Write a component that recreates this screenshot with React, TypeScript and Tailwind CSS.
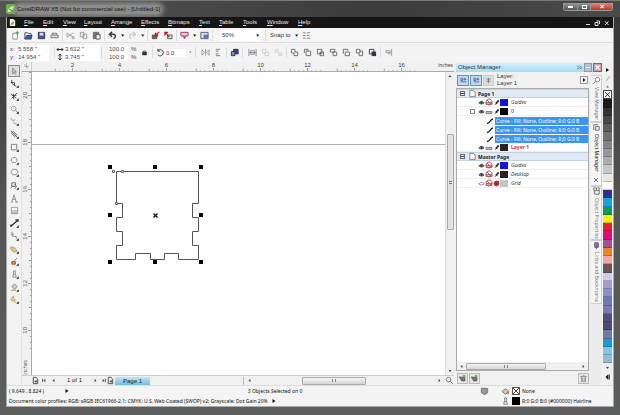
import type { ReactNode } from "react";

// ---------- small drawing helpers ----------

function Glyph({ children, className = "" }: { children: ReactNode; className?: string }) {
  return (
    <svg viewBox="0 0 10 10" className={`h-[9px] w-[9px] shrink-0 ${className}`} fill="none" stroke="#444" strokeWidth="1">
      {children}
    </svg>
  );
}

function Tool({ label, children }: { label: string; children: ReactNode }) {
  return (
    <button aria-label={label} className="flex h-[12px] w-[13px] shrink-0 items-center justify-center">
      <Glyph>{children}</Glyph>
    </button>
  );
}

function Caret() {
  return (
    <svg viewBox="0 0 7 7" className="h-[7px] w-[7px] shrink-0">
      <path d="M2 2.500h3.400L3.700 4.800z" fill="#222" />
    </svg>
  );
}

function Sep() {
  return <span className="mx-px h-[11px] w-px shrink-0 bg-[#dcdcdc]" />;
}

// ---------- title and menu ----------

function TitleBar() {
  return (
    <header className="flex h-[17px] shrink-0 items-center border-t border-[#777] bg-linear-to-r from-[#555] via-[#3c3c3c] via-60% to-[#4a4a4a] pr-[7px] pl-[6px]">
      <svg viewBox="0 0 10 10" className="h-[10px] w-[10px]">
        <rect width="10" height="10" rx="2" fill="#6fb43c" />
        <path d="M1.500 8C2 4 5 2 8.500 2 8 5 6 8 1.500 8z" fill="#e9f8d8" />
        <path d="M3 5l4 2" stroke="#3c8a1c" />
      </svg>
      <h1 className="rounded-full bg-[#8b8b8b] px-px text-[6px] leading-[9px] whitespace-nowrap text-[#111] shadow-[0_0_4px_3px_#858585]">
        CorelDRAW X5 (Not for commercial use) - [Untitled-1]
      </h1>
      <div className="mt-[2px] ml-auto flex h-[8px] self-start overflow-hidden rounded-b-[3px] border border-t-0 border-[#999]">
        <button aria-label="Minimize" className="flex w-[14px] items-center justify-center border-r border-[#999] bg-linear-to-b from-[#999] to-[#555]">
          <span className="h-[2px] w-[5px] bg-white" />
        </button>
        <button aria-label="Maximize" className="flex w-[13px] items-center justify-center border-r border-[#999] bg-linear-to-b from-[#999] to-[#555]">
          <span className="h-[4px] w-[5px] border border-white" />
        </button>
        <button aria-label="Close" className="flex w-[21px] items-center justify-center bg-linear-to-b from-[#e08a7c] to-[#c02c1c]">
          <svg viewBox="0 0 6 6" className="h-[5px] w-[6px]">
            <path d="M1 1l4 4M5 1L1 5" stroke="#fff" strokeWidth="1.300" />
          </svg>
        </button>
      </div>
    </header>
  );
}

const menus = [
  { name: "File", width: "w-[19px]" },
  { name: "Edit", width: "w-[20px]" },
  { name: "View", width: "w-[21px]" },
  { name: "Layout", width: "w-[27px]" },
  { name: "Arrange", width: "w-[30px]" },
  { name: "Effects", width: "w-[27px]" },
  { name: "Bitmaps", width: "w-[31px]" },
  { name: "Text", width: "w-[20px]" },
  { name: "Table", width: "w-[24px]" },
  { name: "Tools", width: "w-[24px]" },
  { name: "Window", width: "w-[31px]" },
  { name: "Help", width: "w-[16px]" },
];

function MenuBar() {
  return (
    <nav className="flex h-[11px] shrink-0 items-center bg-[#151515] text-[6px] leading-[9px] text-[#e8e8e8]">
      <svg viewBox="0 0 10 10" className="mr-[7px] ml-px h-[9px] w-[9px]">
        <path d="M2 1h4l2 2v6H2z" fill="#f2f5e6" />
        <path d="M3 8c0-2 1-4 4-4 0 2-1 4-4 4z" fill="#7cb342" />
      </svg>
      {menus.map((m) => (
        <button key={m.name} className={`${m.width} shrink-0 text-left`}>
          <u>{m.name[0]}</u>
          {m.name.slice(1)}
        </button>
      ))}
      <svg viewBox="0 0 28 8" className="mr-[2px] ml-auto h-[8px] w-[28px]" stroke="#ddd" fill="none">
        <path d="M3 5.500h4M12 3.500h3v3h-3zM13.500 2h3v3M22 2.500l3.500 3.500M25.500 2.500L22 6" />
      </svg>
    </nav>
  );
}

// ---------- toolbars ----------

function StandardBar() {
  return (
    <div className="flex h-[15px] shrink-0 items-center border-b border-[#dedede] bg-[#f5f5f5] pl-[2px]">
      <Tool label="New">
        <path d="M2 2.500h5v6.500H2z" stroke="#888" fill="#fff" />
        <path d="M7 0v4M5 2h4" stroke="#3c9a3c" />
      </Tool>
      <Tool label="Open">
        <path d="M1 9V2h3l1 1h3v2" stroke="#33447c" />
        <path d="M1 9l2-4h6L8 9z" fill="#4a5c98" stroke="#33447c" />
      </Tool>
      <Tool label="Save">
        <path d="M1.500 1.500h7v7h-7z" fill="#4a5596" stroke="#2c3468" />
        <path d="M3 2h4v3H3z" fill="#dfe4f4" stroke="none" />
      </Tool>
      <Tool label="Print">
        <path d="M1 4.500h8v3H1zM2.500 4.500v-2h5v2" stroke="#777" fill="#ddd" />
      </Tool>
      <Sep />
      <Tool label="Cut">
        <path d="M1 2l7 5M1 7l7-5M1 3v3" stroke="#999" />
        <circle cx="8" cy="7.500" r="1.300" stroke="#999" />
      </Tool>
      <Tool label="Copy">
        <path d="M1.500 1.500h4v5h-4zM4.500 3.500h4v5h-4z" stroke="#999" fill="#eee" />
      </Tool>
      <Tool label="Paste">
        <path d="M1.500 1.500h6v7h-6z" fill="#777" stroke="#666" />
        <path d="M4.500 4h4.500v5H4.500z" fill="#eee" stroke="#555" />
      </Tool>
      <Sep />
      <Tool label="Undo">
        <path d="M4.500 1L1.500 3.700l3 2.800M2 3.700h4c3 0 3 4 0 5" stroke="#3e3e46" strokeWidth="1.600" />
      </Tool>
      <Caret />
      <Tool label="Redo">
        <path d="M5.500 1l3 2.700-3 2.800M8 3.700H4C1 3.700 1 7.700 4 8.700" stroke="#ccc" strokeWidth="1.400" />
      </Tool>
      <Caret />
      <Sep />
      <Tool label="Import">
        <path d="M1.500 4.500h5v4h-5z" stroke="#555" fill="#b04050" />
        <path d="M9 1L5 5M5 2v3h3" stroke="#b01c30" strokeWidth="1.400" />
      </Tool>
      <Tool label="Export">
        <path d="M4 4.500h5v4H4z" stroke="#555" fill="#ddd" />
        <path d="M1 1.500l5 5M1 5V1.500h3.500" stroke="#b01c30" strokeWidth="1.400" />
      </Tool>
      <Sep />
      <Tool label="Application launcher">
        <path d="M1 1.500h8v4H1z" stroke="#a02848" fill="#f4d4dc" />
        <path d="M3 6h4L5 9z" fill="#a02848" stroke="none" />
      </Tool>
      <Caret />
      <Tool label="Welcome screen">
        <path d="M1 1.500h8v7H1z" stroke="#4a5078" fill="#dfe2f0" />
        <path d="M4 4h5v4H4z" fill="#6a74a8" stroke="none" />
      </Tool>
      <Sep />
      <div className="relative mr-[3px] ml-[6px] flex h-[11px] w-[41px] shrink-0 items-center bg-white">
        <select aria-label="Zoom level" className="h-[11px] w-full appearance-none pl-[2px] text-[6px] leading-[11px] text-[#333]">
          <option>50%</option>
        </select>
        <span className="pointer-events-none absolute inset-y-0 right-0 flex items-center">
          <Caret />
        </span>
      </div>
      <Sep />
      <button className="ml-[3px] flex items-center gap-[2px] text-[6px] text-[#333]">
        Snap to <Caret />
      </button>
      <Tool label="Options">
        <path d="M1 2h3M1 5h3M1 8h3M5.500 2H9M5.500 5H8M5.500 8H9" stroke="#777" />
      </Tool>
    </div>
  );
}

function Field({ label, value, className }: { label: string; value: string; className: string }) {
  return (
    <input
      aria-label={label}
      defaultValue={value}
      className={`h-[8px] shrink-0 bg-white px-px text-[6px] leading-[8px] text-[#444] ${className}`}
    />
  );
}

const shaping = [
  { label: "Weld", d: "M1.500 1.500h4v3h3v4h-4v-3h-3z" },
  { label: "Trim", d: "M1.500 5.500v-4h4v2M3.500 3.500h5v5h-5z" },
  { label: "Intersect", d: "M1.500 1.500h5v5h-5zM4.500 4.500h4v4h-4zM4.500 5.500h2" },
  { label: "Simplify", d: "M1.500 1.500h5v3h-5zM4.500 4.500h4v4h-4z" },
  { label: "Front minus back", d: "M1.500 6.500v-5h5v2M3.500 4.500h5v4h-5z" },
  { label: "Back minus front", d: "M1.500 1.500h4v4h-4zM5.500 3.500h3v5h-4v-3" },
];

function PropertyBar() {
  return (
    <div className="flex h-[19px] shrink-0 items-center bg-[#f3f3f3] pl-[3px] text-[6px] leading-[8px] text-[#444]">
      <div className="flex w-[43px] shrink-0 flex-col">
        <label className="flex">
          <span className="w-[7px]">x:</span>
          <Field label="x" value={'5.558 "'} className="w-[32px]" />
        </label>
        <label className="flex">
          <span className="w-[7px]">y:</span>
          <Field label="y" value={'14.954 "'} className="w-[32px]" />
        </label>
      </div>
      <Sep />
      <svg viewBox="0 0 8 16" className="h-[16px] w-[8px] shrink-0" stroke="#333" fill="none">
        <path d="M1 4.500h6M2.500 3L1 4.500 2.500 6M5.500 3L7 4.500 5.500 6M4 9v6M2.500 10.500L4 9l1.500 1.500M2.500 13.500L4 15l1.500-1.500" />
      </svg>
      <div className="flex w-[36px] shrink-0 flex-col">
        <Field label="Width" value={'3.612 "'} className="w-full" />
        <Field label="Height" value={'3.745 "'} className="w-full" />
      </div>
      <Sep />
      <div className="ml-[5px] flex w-[20px] shrink-0 flex-col">
        <Field label="Scale x" value="100.0" className="w-full" />
        <Field label="Scale y" value="100.0" className="w-full" />
      </div>
      <div className="flex w-[10px] shrink-0 flex-col pl-[3px]">
        <span>%</span>
        <span>%</span>
      </div>
      <Tool label="Lock ratio">
        <path d="M3.500 5V3.500h3V5" />
        <path d="M2.500 4.500h5v3.500h-5z" fill="#333" stroke="none" />
      </Tool>
      <Sep />
      <span className="w-[2px] shrink-0" />
      <Glyph>
        <path d="M2 3a3.500 3.500 0 1 1 0 4.500M2 1v2.500h2.500" />
      </Glyph>
      <Field label="Rotation" value="0.0" className="w-[21px]" />
      <span className="w-[8px] shrink-0 pl-[3px]">°</span>
      <Sep />
      <span className="w-[2px] shrink-0" />
      <Tool label="Mirror horizontally">
        <path d="M1 2l3 3-3 3zM9 2L6 5l3 3zM5 1v8" stroke="#999" />
      </Tool>
      <Tool label="Mirror vertically">
        <path d="M2 1.500h5M2 3.500h3M2 6.500h3M2 8.500h5" stroke="#777" />
      </Tool>
      <Sep />
      <Tool label="Wrap text">
        <path d="M4 1.500h5v5H4z" fill="#3c3c84" stroke="#26265c" />
        <path d="M1.500 4h4v4.500h-4z" fill="#8c8cc0" stroke="#26265c" />
      </Tool>
      <Sep />
      <span className="w-[2px] shrink-0" />
      <Tool label="Combine">
        <path d="M1 1v8M9 1v8M3 3h4v4H3zM1 5h8" stroke="#888" />
      </Tool>
      <Tool label="Group">
        <path d="M1.500 1.500h4v4h-4zM4.500 4.500h4v4h-4z" stroke="#ccc" />
      </Tool>
      <Tool label="Ungroup">
        <path d="M1.500 1.500h3v3h-3zM5.500 5.500h3v3h-3z" stroke="#ccc" />
      </Tool>
      <Sep />
      {shaping.map((s) => (
        <Tool key={s.label} label={s.label}>
          <path d={s.d} stroke="#666" />
        </Tool>
      ))}
      <Tool label="Create boundary">
        <path d="M1.500 1.500h5v5h-5z" fill="#eee" stroke="#333" />
        <path d="M4 4h5v5H4z" fill="#33334c" stroke="none" />
      </Tool>
      <Sep />
      <Tool label="Align">
        <path d="M2 3h5v2H2zM4 6.500h4M8.500 1v8" stroke="#999" />
      </Tool>
    </div>
  );
}

// ---------- toolbox ----------

const tools = [
  { name: "Shape", d: "M2 1c0 4 1 6 5 7M1 4h4v3", color: "#444" },
  { name: "Crop", d: "M1 2l6 5M2 7l6-6M2 4h5M4 2v6", color: "#444" },
  { name: "Zoom", d: "M4 1.500a2.500 2.500 0 1 0 .1 0zM6 6l3 3", color: "#888" },
  { name: "Freehand", d: "M1 1l2 3 3-1M4 5c0 3 3 3 4 3", color: "#999" },
  { name: "Smart fill", d: "M1 1l7 7M1 3l5 5M3 1l5 5", color: "#555" },
  { name: "Rectangle", d: "M1.500 1.500h6v6h-6z", color: "#777" },
  { name: "Ellipse", d: "M4.500 1.500a3.200 3 0 1 0 .1 0z", color: "#888" },
  { name: "Polygon", d: "M3 1.500h4l2 3-2 3H3l-2-3z", color: "#888" },
  { name: "Basic shapes", d: "M2 2h4v4H2zM5 4a2 2 0 1 1 0 4M1 8l2-3", color: "#666" },
  { name: "Text", d: "M2 9l2.500-8L7 9M3 6h3M1 9h2M6 9h3", color: "#888" },
  { name: "Table", d: "M1.500 1.500h7v6h-7zM1.500 5.500h7M1 8.500h8", color: "#999" },
  { name: "Dimension", d: "M1 8l7-6M1 6v3M6 1h3v2", color: "#333" },
  { name: "Connector", d: "M1 1h2v4h4v3M1 3h3", color: "#888" },
  { name: "Blend", d: "M1 2l4 1 3 4-4 1-3-3z", color: "#c09850", fill: "#dcc48c" },
  { name: "Eyedropper", d: "M8 1L5 4M2 5h4v3H2z", color: "#a85c34", fill: "#d88850" },
  { name: "Outline", d: "M4 1h2v3l1 4H3l1-4zM4 5h2", color: "#888" },
  { name: "Fill", d: "M2 4l3-3 3 3-3 3zM1 8h6", color: "#a08850", fill: "#ccc" },
  { name: "Interactive fill", d: "M4 1v3l2 2-3 1-2-2zM5 8h2", color: "#d09a40", fill: "#ecc880" },
];

function Toolbox() {
  return (
    <aside className="w-[15px] shrink-0 border-r border-[#e2e2e2] bg-[#f3f3f3] pt-[3px]">
      <div className="flex h-[241px] flex-col items-center justify-between">
        <button aria-label="Pick" className="flex h-[12px] w-[12px] items-center justify-center border border-[#888] bg-[#dedede]">
          <Glyph>
            <path d="M3 1.500v6l2-1.500 1.500 2.500M3 1.500l4 4H5" stroke="#777" />
          </Glyph>
        </button>
        {tools.map((t) => (
          <button key={t.name} aria-label={t.name} className="flex h-[12px] w-[12px] items-center justify-center">
            <Glyph>
              <path d={t.d} stroke={t.color} fill={t.fill} strokeWidth={t.name === "Dimension" ? "1.500" : "1"} />
              {t.name !== "Text" && t.name !== "Table" && <path d="M7.500 9.500h2v-2z" fill="#111" stroke="#111" strokeWidth="0.500" />}
            </Glyph>
          </button>
        ))}
      </div>
    </aside>
  );
}

// ---------- rulers and canvas ----------

function HorizontalRuler() {
  return (
    <div className="flex h-[10px] shrink-0 border-b border-[#aaa] bg-[#f1f1f1] text-[6px] leading-[6px] text-[#444]">
      <div className="w-[10px] shrink-0 border-r border-[#ccc]">
        <Glyph>
          <path d="M2 2l5 5M2 5h6M5 1v6" stroke="#999" strokeWidth="0.700" />
        </Glyph>
      </div>
      <div className="flex min-w-0 flex-1 overflow-hidden pl-[17px]">
        {[2, 4, 6, 8, 10, 12, 14, 16].map((n) => (
          <div key={n} className="flex w-[47px] shrink-0 flex-col items-center justify-between">
            <span className="leading-[6px]">{n}</span>
            <svg viewBox="0 0 47 4" className="h-[4px] w-[47px]" stroke="#888">
              <path d="M23.500 0v4M.5 1v3M12 3v1M35 3v1M6 3v1M18 3v1M29 3v1M41 3v1" />
            </svg>
          </div>
        ))}
      </div>
      <span className="shrink-0 pr-px font-['Noto_Sans',sans-serif] text-[5px]">inches</span>
    </div>
  );
}

function VerticalRuler() {
  return (
    <div className="flex w-[10px] shrink-0 flex-col overflow-hidden border-r border-[#aaa] bg-[#f1f1f1] text-[6px] text-[#555]">
      {[20, 18, 16, 14, 12, 10].map((n) => (
        <div key={n} className="flex h-[47px] shrink-0 items-center justify-between">
          <span className="rotate-180 leading-[6px] [writing-mode:vertical-rl]">{n}</span>
          <svg viewBox="0 0 3 47" className="h-[47px] w-[3px]" stroke="#999">
            <path d="M0 23.500h3M1 .5h2M2 12.500h1M2 35.500h1M2 6.500h1M2 18.500h1M2 29.500h1M2 41.500h1" />
          </svg>
        </div>
      ))}
      <span className="mt-auto rotate-180 self-start font-['Noto_Sans',sans-serif] text-[5px] leading-[6px] [writing-mode:vertical-rl]">inches</span>
    </div>
  );
}

function Drawing() {
  const handles = [78, 123, 169].flatMap((x) => [95, 143, 190].map((y) => ({ x, y })));
  return (
    <svg className="h-full min-w-0 flex-1 bg-white" fill="none">
      {/* page edge */}
      <path d="M0 72.500h2000" stroke="#b0b0b0" />
      {/* notched panel */}
      <path
        d="M84.500 99.500h82v32h-6v14h6v14h-6v14h6v14h-20v-6h-14v6h-14v-6h-15v6h-19v-14h6v-14h-6v-14h6v-14h-6z"
        stroke="#555"
      />
      <path d="M80.500 98.500h2v2h-2zM89.500 98.500h2v2h-2zM83.500 130.500h2v2h-2z" stroke="#666" fill="#fff" />
      {handles.map((h) =>
        h.x === 123 && h.y === 143 ? (
          <path key="center" d="M121.500 141.500l4 4M125.500 141.500l-4 4" stroke="#111" strokeWidth="1.400" />
        ) : (
          <rect key={`${h.x}-${h.y}`} x={h.x - 2} y={h.y - 2} width="4" height="4" fill="#000" />
        ),
      )}
    </svg>
  );
}

function VerticalScroll() {
  return (
    <div className="flex w-[9px] shrink-0 flex-col items-center border-l border-[#ddd] bg-[#f0f0f0]">
      <svg viewBox="0 0 8 8" className="h-[8px] w-[8px]">
        <path d="M2.500 5L4 3l1.500 2z" fill="#444" />
      </svg>
      <div className="flex-21" />
      <div className="flex w-[7px] flex-36 items-center justify-center rounded-[1px] border border-[#aaa] bg-[#e2e2e2]">
        <span className="h-[3px] w-[3px] border-y border-[#777]" />
      </div>
      <div className="flex-53" />
      <svg viewBox="0 0 8 8" className="h-[8px] w-[8px]">
        <path d="M2.500 3L4 5l1.500-2z" fill="#444" />
      </svg>
    </div>
  );
}

function PageNav() {
  return (
    <div className="flex h-[10px] shrink-0 items-center border-t border-[#ccc] bg-[#f0f0f0] text-[6px] leading-[9px] text-[#222]">
      <span className="w-[9px] shrink-0" />
      <button aria-label="Add page before" className="w-[9px]">
        <Glyph>
          <path d="M2.500 1.500h3l2 2v5h-5zM4 6h3M5.500 4.500v3" />
        </Glyph>
      </button>
      <button aria-label="First page" className="w-[9px]">
        <Glyph>
          <path d="M6 3L4 5l2 2z" fill="#444" stroke="none" />
          <path d="M3 3v4" />
        </Glyph>
      </button>
      <button aria-label="Previous page" className="w-[9px]">
        <Glyph>
          <path d="M6 3L4 5l2 2z" fill="#444" stroke="none" />
        </Glyph>
      </button>
      <span className="w-[33px] shrink-0 text-center">1 of 1</span>
      <button aria-label="Next page" className="w-[8px]">
        <Glyph>
          <path d="M4 3l2 2-2 2z" fill="#444" stroke="none" />
        </Glyph>
      </button>
      <button aria-label="Last page" className="w-[7px]">
        <Glyph>
          <path d="M4 3l2 2-2 2z" fill="#444" stroke="none" />
          <path d="M7 3v4" />
        </Glyph>
      </button>
      <button aria-label="Add page after" className="w-[9px]">
        <Glyph>
          <path d="M2.500 1.500h3l2 2v5h-5zM4 6h3M5.500 4.500v3" />
        </Glyph>
      </button>
      <button className="h-[8px] w-[35px] shrink-0 bg-linear-to-b from-[#bfe6f6] to-[#6fbde2] leading-[8px]">Page 1</button>
      <span className="mr-px ml-auto h-[8px] w-px bg-[#bbb]" />
      <div className="flex h-full w-[46%] shrink-0 items-center">
        <Glyph>
          <path d="M6 3L4 5l2 2z" fill="#444" stroke="none" />
        </Glyph>
        <div className="flex-50" />
        <div className="flex h-[8px] flex-64 items-center justify-center rounded-[1px] border border-[#aaa] bg-linear-to-b from-[#f5f5f5] to-[#d4d4d4]">
          <span className="h-[3px] w-[4px] border-x border-[#888]" />
        </div>
        <div className="flex-72" />
        <Glyph>
          <path d="M4 3l2 2-2 2z" fill="#444" stroke="none" />
        </Glyph>
      </div>
      <button aria-label="Navigator" className="ml-px">
        <Glyph>
          <circle cx="4" cy="4" r="2.500" stroke="#777" />
          <path d="M6 6l3 3" stroke="#777" />
        </Glyph>
      </button>
    </div>
  );
}

// ---------- object manager docker ----------

function Eye({ off = false }: { off?: boolean }) {
  return (
    <svg viewBox="0 0 8 8" className="h-[7px] w-[7px] shrink-0" stroke={off ? "#777" : "#333"} fill="none">
      <path d="M1 4.500c1.500-2.500 4.500-2.500 6 0-1.500 1.500-4.500 1.500-6 0z" />
      {!off && <circle cx="4" cy="4.200" r="1" fill="#333" />}
    </svg>
  );
}

function Printer({ off = false }: { off?: boolean }) {
  return (
    <svg viewBox="0 0 8 8" className="h-[8px] w-[8px] shrink-0" fill="none">
      <path d="M1 4.500h6v2H1z" fill="#bbb" stroke="#888" />
      {off && <path d="M4 1a3 3 0 1 0 .1 0zM2 2l4 4" stroke="#cc4850" />}
    </svg>
  );
}

function Pencil({ off = false }: { off?: boolean }) {
  return (
    <svg viewBox="0 0 8 8" className="h-[7px] w-[7px] shrink-0" fill="none">
      <path d="M1.500 7l2-3 2 1z" fill="#555" />
      <path d="M3.500 5L6.500 1.500" stroke="#333" strokeWidth="2" />
      {off && <circle cx="4" cy="4" r="2.800" stroke="#c03440" fill="#8c3038" />}
    </svg>
  );
}

type Layer = { name: string; swatch: string; text: string; noPrint?: boolean; hidden?: boolean; noEdit?: boolean; box?: boolean };

function LayerRow({ name, swatch, text, noPrint, hidden, noEdit, box }: Layer) {
  return (
    <li className="flex h-[9px] items-center border-b border-[#eee] pl-[13px]">
      <span className="w-[8px] shrink-0">{box && <span className="block h-[5px] w-[5px] border border-[#888] bg-white" />}</span>
      <Eye off={hidden} />
      <Printer off={noPrint} />
      <Pencil off={noEdit} />
      <span className={`h-[7px] w-[8px] shrink-0 ${swatch}`} />
      <span className={`pl-[3px] ${text}`}>{name}</span>
    </li>
  );
}

function PageRow({ name }: { name: string }) {
  return (
    <li className="flex h-[9px] items-center gap-[3px] border-y border-[#c4d2de] bg-[#dfeaf4] pl-[3px] font-bold text-[#222]">
      <span className="flex h-[5px] w-[5px] items-center justify-center border border-[#667]">
        <span className="h-px w-[3px] bg-[#445]" />
      </span>
      <Glyph className="-mr-[2px]">
        <path d="M2 1.500h4l2 2v5H2z" stroke="#778" fill="#fff" />
      </Glyph>
      {name}
    </li>
  );
}

function CurveRow() {
  return (
    <li className="flex h-[9px] items-center pl-[29px]">
      <svg viewBox="0 0 9 8" className="h-[8px] w-[9px] shrink-0" fill="none" stroke="#222" strokeWidth="1.400">
        <path d="M1 6.500c3 0 3-4 6-4.500" />
      </svg>
      <span className="h-[8px] min-w-0 flex-1 bg-[#3a94f0] pl-px leading-[8px] whitespace-nowrap text-white">
        Curve - Fill: None, Outline: R:0 G:0 B
      </span>
    </li>
  );
}

function DockerHeader() {
  return (
    <div className="flex h-[9px] shrink-0 items-center gap-px bg-linear-to-b from-[#d4effc] to-[#a4dcf6] pl-[2px]">
      <h2 className="mr-auto text-[6px] leading-[9px]">Object Manager</h2>
      <svg viewBox="0 0 8 8" className="h-[7px] w-[7px]" stroke="#456" fill="none">
        <path d="M1.500 2L3.500 4l-2 2M4.500 2l2 2-2 2" />
      </svg>
      <button aria-label="Roll up" className="flex h-[9px] w-[8px] items-center justify-center border border-[#8a9cac] bg-[#b4c4d2]">
        <span className="h-px w-[4px] bg-white" />
      </button>
      <button aria-label="Close" className="flex h-[9px] w-[9px] items-center justify-center border border-[#94606c] bg-[#cf9ca6]">
        <svg viewBox="0 0 7 7" className="h-[7px] w-[7px]">
          <path d="M1.500 1.500l4 4M5.500 1.500l-4 4" stroke="#fff" strokeWidth="1.200" />
        </svg>
      </button>
    </div>
  );
}

function ObjectManager() {
  return (
    <section className="flex min-w-0 flex-1 flex-col">
      <div className="flex h-[16px] shrink-0 items-center gap-px pl-px">
        {["Show properties", "Edit across layers"].map((label) => (
          <button key={label} aria-label={label} className="flex h-[11px] w-[12px] items-center justify-center border border-[#6f93b4] bg-[#b9d9ee]">
            <Glyph className="scale-75">
              <path d="M1 2h3v3H1zM1 7h8M5 3h4M7 1v4" stroke="#334a78" />
            </Glyph>
          </button>
        ))}
        <button aria-label="Layer manager view" className="flex h-[11px] w-[11px] items-center justify-center border border-[#ccc] bg-[#ddd]">
          <Glyph className="scale-75">
            <path d="M2 3h6M2 6h6M5 1v8" stroke="#666" />
          </Glyph>
        </button>
        <p className="pl-[2px] leading-[7px]">
          Layer:
          <br />
          Layer 1
        </p>
        <button aria-label="Options" className="mr-px ml-auto flex h-[8px] w-[8px] items-center justify-center border border-[#999] bg-white">
          <svg viewBox="0 0 6 6" className="h-[6px] w-[6px]">
            <path d="M2 1l2.500 2L2 5z" fill="#111" />
          </svg>
        </button>
      </div>
      <div className="flex min-h-0 flex-1 flex-col border border-[#aaa] bg-white">
        <ul className="min-h-0 flex-1 overflow-hidden font-['Noto_Sans',sans-serif] text-[5px] leading-[8px] whitespace-nowrap">
          <PageRow name="Page 1" />
          <LayerRow name="Guides" swatch="bg-[#1414e0]" text="text-[#333] italic" noPrint />
          <LayerRow name="0" swatch="bg-black" text="text-[#222]" box />
          <CurveRow />
          <CurveRow />
          <CurveRow />
          <LayerRow name="Layer 1" swatch="bg-[#2b2323]" text="font-bold text-[#e0282c]" />
          <PageRow name="Master Page" />
          <LayerRow name="Guides" swatch="bg-[#1414e0]" text="text-[#333] italic" noPrint />
          <LayerRow name="Desktop" swatch="bg-[#2b2323]" text="text-[#333] italic" noPrint />
          <LayerRow name="Grid" swatch="bg-[#c4c4c4]" text="text-[#333] italic" noPrint hidden noEdit />
        </ul>
        <div className="flex h-[8px] shrink-0 items-center bg-[#f0f0f0]">
          <Glyph>
            <path d="M6 3L4 5l2 2z" fill="#444" stroke="none" />
          </Glyph>
          <div className="flex h-[7px] w-[80px] items-center justify-center rounded-[1px] border border-[#aaa] bg-linear-to-b from-[#f5f5f5] to-[#d4d4d4]">
            <span className="h-[3px] w-[4px] border-x border-[#888]" />
          </div>
          <Glyph className="ml-auto">
            <path d="M4 3l2 2-2 2z" fill="#444" stroke="none" />
          </Glyph>
        </div>
      </div>
      <div className="flex h-[14px] shrink-0 items-center gap-px pl-px">
        {["New layer", "New master layer"].map((label) => (
          <button key={label} aria-label={label} className="flex h-[11px] w-[11px] items-center justify-center border border-[#b4c0b4] bg-[#e8e8e8]">
            <Glyph className="scale-90">
              <path d="M1 3l3 5h4V4z" fill="#777" stroke="#555" />
              <path d="M7 0v4M5 2h4" stroke="#3c9a3c" />
            </Glyph>
          </button>
        ))}
        <button aria-label="Delete" className="ml-auto flex h-[11px] w-[11px] items-center justify-center border border-[#bbb] bg-[#e8e8e8]">
          <Glyph className="scale-90">
            <path d="M1 2.500h8M2.500 3v6h5V3M4 1h2M4 4v4M6 4v4" stroke="#888" />
          </Glyph>
        </button>
      </div>
    </section>
  );
}

const dockers = [
  { name: "View Manager", height: "h-[47px]", text: "text-[#777]", d: "M6 1.500a2.500 2.500 0 1 0 .1 0zM4 6L1 9" },
  { name: "Object Manager", height: "h-[64px]", text: "text-[#111]", d: "M2 8V2h5M4 4h4v4H4z" },
  { name: "Object Properties", height: "h-[54px]", text: "text-[#777]", d: "M2 1h3v3H2zM5 4h3v4H3V4M6 1h2v3" },
  { name: "Links and Bookmarks", height: "h-[64px]", text: "text-[#777]", d: "M3 2h4v5H3zM5 5v4" },
];

function DockerTabs() {
  return (
    <div className="flex w-[13px] shrink-0 flex-col bg-[#ececec] pt-[3px] pl-[2px] font-['Noto_Sans',sans-serif] text-[5px]">
      {dockers.map((t) => (
        <button key={t.name} className={`flex shrink-0 flex-col items-center gap-[2px] border border-l-0 border-[#d0d0d0] bg-[#f6f6f6] ${t.height} ${t.text}`}>
          <Glyph>
            <path d={t.d} stroke={t.name.startsWith("Links") ? "#5c4c84" : "#666"} fill={t.name.startsWith("Links") ? "#8c7cb0" : "none"} />
          </Glyph>
          <span className="leading-[7px] whitespace-nowrap [writing-mode:vertical-rl]">{t.name}</span>
          {t.name === "Object Manager" && (
            <svg viewBox="0 0 6 6" className="mt-[3px] h-[6px] w-[6px]" stroke="#777">
              <path d="M1 1l4 4M5 1L1 5" />
            </svg>
          )}
        </button>
      ))}
    </div>
  );
}

function Docker() {
  return (
    <div className="flex w-[148px] shrink-0 flex-col bg-[#f0f0f0] pt-px pl-[2px] text-[6px] text-[#333]">
      <DockerHeader />
      <div className="flex min-h-0 flex-1">
        <ObjectManager />
        <DockerTabs />
      </div>
    </div>
  );
}

const palette = [
  "bg-[#1c1c1c]",
  "bg-[#333333]",
  "bg-[#484848]",
  "bg-[#5c5c5c]",
  "bg-[#707070]",
  "bg-[#858585]",
  "bg-[#999999]",
  "bg-[#adadad]",
  "bg-[#c6c6c6]",
  "bg-[#e8e8e0]",
  "bg-white",
  "bg-[#2e3192]",
  "bg-[#14a4de]",
  "bg-[#0c9a54]",
  "bg-[#fdf100]",
  "bg-[#e4202c]",
  "bg-[#e4087c]",
  "bg-[#a0509a]",
  "bg-[#f08024]",
  "bg-[#f0a8a4]",
  "bg-[#6c5454]",
  "bg-[#ccccec]",
  "bg-[#a49cd0]",
  "bg-[#8890cc]",
  "bg-[#6c78b8]",
  "bg-[#7c78b4]",
  "bg-[#50507c]",
  "bg-[#4c4c70]",
  "bg-[#6c7ca4]",
  "bg-[#149cd4]",
  "bg-[#7cc8ec]",
  "bg-[#94bcd0]",
];

function Palette() {
  return (
    <div className="flex w-[11px] shrink-0 flex-col items-center bg-[#f0f0f0]">
      <svg viewBox="0 0 9 28" className="h-[28px] w-[9px] shrink-0">
        <path d="M3 6l3 2-3 2z" fill="#111" />
        <path d="M3 19l4-5" stroke="#aaa" />
        <path d="M3 25.500l1.500-2 1.500 2z" fill="#777" />
      </svg>
      <div className="flex w-[9px] flex-1 flex-col">
        <button aria-label="No color" className="flex-1 border border-[#444] bg-white">
          <svg viewBox="0 0 7 7" className="h-full w-full" stroke="#333">
            <path d="M1 1l5 5M6 1L1 6" />
          </svg>
        </button>
        {palette.map((c) => (
          <button key={c} aria-label="Swatch" className={`flex-1 border-b border-black/20 ${c}`} />
        ))}
      </div>
      <svg viewBox="0 0 9 22" className="h-[22px] w-[9px] shrink-0">
        <path d="M3 4h3L4.500 6z" fill="#444" />
        <path d="M5 11.500L2.500 14 5 16.500zM5.500 11.500h1.200v5H5.500z" fill="#111" />
      </svg>
    </div>
  );
}

// ---------- status bar ----------

function StatusBar() {
  return (
    <footer className="flex h-[21px] shrink-0 border-t border-[#ddd] bg-[#f4f4f4] font-['Noto_Sans',sans-serif] text-[5px] leading-[10px] whitespace-nowrap text-[#111]">
      <div className="flex min-w-0 flex-1 flex-col pl-[2px]">
        <div className="flex items-center">
          <span className="w-[55px] shrink-0">( 9.649 , 8.824 )</span>
          <svg viewBox="0 0 6 6" className="h-[6px] w-[6px]">
            <path d="M1.500 1l3 2-3 2z" fill="#111" />
          </svg>
          <span className="mx-auto">3 Objects Selected on 0</span>
        </div>
        <div className="flex items-center gap-[3px]">
          Document color profiles: RGB: sRGB IEC61966-2.1; CMYK: U.S. Web Coated (SWOP) v2; Grayscale: Dot Gain 20%
          <svg viewBox="0 0 6 6" className="h-[6px] w-[6px]">
            <path d="M1.500 1l3 2-3 2z" fill="#111" />
          </svg>
        </div>
      </div>
      <Glyph className="mt-px mr-[12px]">
        <path d="M1.500 1.500h7v5l-3.500 2-3.500-2z" fill="#999" stroke="#777" />
      </Glyph>
      <div className="flex w-[112px] shrink-0 flex-col">
        <div className="flex items-center gap-[2px]">
          <Glyph>
            <path d="M1 5l4-3 4 3-4 3z" fill="#d8c8a8" stroke="#776" />
            <path d="M8 5v3" stroke="#c07030" strokeWidth="1.500" />
          </Glyph>
          <svg viewBox="0 0 9 9" className="h-[8px] w-[8px]" fill="#fff" stroke="#333">
            <path d="M.5.5h8v8h-8zM1 1l7 7M8 1L1 8" />
          </svg>
          <span>None</span>
        </div>
        <div className="flex items-center gap-[2px]">
          <Glyph>
            <path d="M4 1h2v3l1 4H3l1-4zM4 5h2" stroke="#777" />
          </Glyph>
          <span className="h-[8px] w-[8px] bg-black" />
          <span>R:0 G:0 B:0 (#000000) Hairline</span>
        </div>
      </div>
    </footer>
  );
}

export default function App() {
  return (
    <div className="flex h-screen flex-col overflow-hidden bg-linear-to-b from-[#333] via-[#555] to-[#5c5f5d] font-['Liberation_Sans',sans-serif]">
      <TitleBar />
      <div className="mx-[6px] mb-[8px] flex min-h-0 flex-1 flex-col border-x border-b border-[#a8a8a8]">
        <MenuBar />
        <StandardBar />
        <PropertyBar />
        <main className="flex min-h-0 flex-1">
          <Toolbox />
          <div className="flex min-w-0 flex-1 flex-col">
            <HorizontalRuler />
            <div className="flex min-h-0 flex-1">
              <VerticalRuler />
              <Drawing />
              <VerticalScroll />
            </div>
            <PageNav />
          </div>
          <Docker />
          <Palette />
        </main>
        <StatusBar />
      </div>
    </div>
  );
}
